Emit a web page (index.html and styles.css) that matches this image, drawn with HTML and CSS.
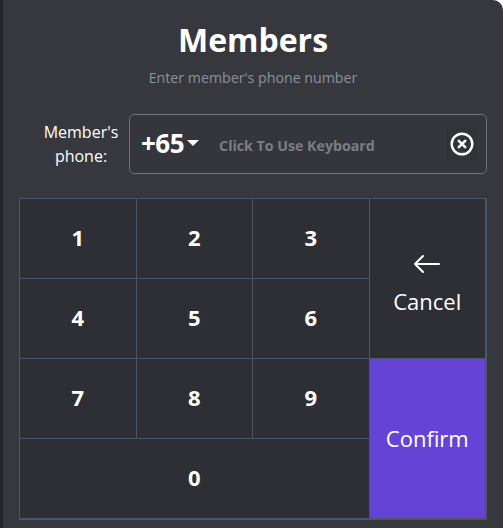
FILE: index.html
```html
<!DOCTYPE html>
<html>
<head>
<meta charset="utf-8">
<link rel="stylesheet" href="styles.css">
</head>
<body>
<div class="panel">
  <h1 class="title">Members</h1>
  <p class="subtitle">Enter member's phone number</p>
  <div class="phone-row">
    <label class="phone-label">Member's<br>phone:</label>
    <div class="phone-input">
      <span class="code">+65</span>
      <span class="caret"></span>
      <span class="placeholder">Click To Use Keyboard</span>
      <span class="clear">
        <svg width="26" height="26" viewBox="0 0 26 26"><circle cx="13" cy="13" r="10.3" fill="none" stroke="#fff" stroke-width="2.4"/><path d="M9.8 9.8 L16.2 16.2 M16.2 9.8 L9.8 16.2" stroke="#fff" stroke-width="2.6" stroke-linecap="round"/></svg>
      </span>
    </div>
  </div>
  <div class="keypad">
    <div class="key">1</div>
    <div class="key">2</div>
    <div class="key">3</div>
    <div class="key action cancel">
      <svg width="28" height="20" viewBox="0 0 28 20"><path d="M2 10 H26 M10 2 L2 10 L10 18" fill="none" stroke="#fff" stroke-width="2" stroke-linecap="round" stroke-linejoin="round"/></svg>
      <span>Cancel</span>
    </div>
    <div class="key">4</div>
    <div class="key">5</div>
    <div class="key">6</div>
    <div class="key">7</div>
    <div class="key">8</div>
    <div class="key">9</div>
    <div class="key action confirm"><span>Confirm</span></div>
    <div class="key zero">0</div>
  </div>
</div>
</body>
</html>
```
FILE: styles.css
```css
html, body {
  margin: 0;
  padding: 0;
  background: #ffffff;
}
body {
  width: 503px;
  height: 528px;
  overflow: hidden;
  font-family: "Open Sans", "Noto Sans", sans-serif;
}
.panel {
  box-sizing: border-box;
  width: 503px;
  height: 528px;
  background: #37383d;
  border-left: 3px solid #252629;
  border-top-right-radius: 10px;
  padding: 18px 16px 0 16px;
  display: flex;
  flex-direction: column;
}
.title {
  margin: 0;
  text-align: center;
  color: #ffffff;
  font-size: 32px;
  font-weight: 700;
  line-height: 44px;
}
.subtitle {
  margin: 6px 0 0 0;
  text-align: center;
  color: #8c929b;
  font-size: 14.2px;
  line-height: 20px;
}
.phone-row {
  margin-top: 26px;
  display: flex;
  align-items: center;
}
.phone-label {
  width: 96px;
  margin-left: 14px;
  text-align: center;
  color: #ffffff;
  font-size: 16px;
  line-height: 24px;
}
.phone-input {
  flex: 1;
  box-sizing: border-box;
  height: 60px;
  border: 1px solid #6f737b;
  border-radius: 5px;
  background: #35363b;
  display: flex;
  align-items: center;
  padding: 0 9px 0 11px;
}
.code {
  color: #ffffff;
  font-size: 26px;
  font-weight: 700;
  letter-spacing: -0.5px;
  margin-top: -2px;
}
.caret {
  width: 0;
  height: 0;
  border-left: 6px solid transparent;
  border-right: 6px solid transparent;
  border-top: 6px solid #ffffff;
  margin-left: 3px;
  margin-top: -2px;
}
.placeholder {
  flex: 1;
  margin-left: 20px;
  color: #7b7e84;
  font-size: 14.2px;
  font-weight: 700;
  margin-top: 2px;
}
.clear {
  display: flex;
  align-items: center;
  justify-content: center;
  width: 30px;
  height: 32px;
  background: #323338;
}
.keypad {
  margin-top: 24px;
  box-sizing: border-box;
  height: 322px;
  display: grid;
  grid-template-columns: repeat(4, 1fr);
  grid-template-rows: repeat(4, 1fr);
  gap: 1px;
  background: #4b5563;
  padding: 1px 2px 2px 1px;
}
.key {
  background: #2e2f34;
  color: #ffffff;
  font-size: 22px;
  font-weight: 700;
  display: flex;
  align-items: center;
  justify-content: center;
  padding-bottom: 4px;
}
.action {
  grid-column: 4;
  grid-row: span 2;
  flex-direction: column;
  font-weight: 400;
  font-size: 22px;
}
.cancel {
  grid-row: 1 / span 2;
  gap: 12px;
  padding-top: 12px;
  padding-bottom: 0;
}
.confirm {
  grid-row: 3 / span 2;
  background: #6643d7;
  padding-bottom: 2px;
}
.zero {
  grid-column: 1 / span 3;
  grid-row: 4;
}
```
